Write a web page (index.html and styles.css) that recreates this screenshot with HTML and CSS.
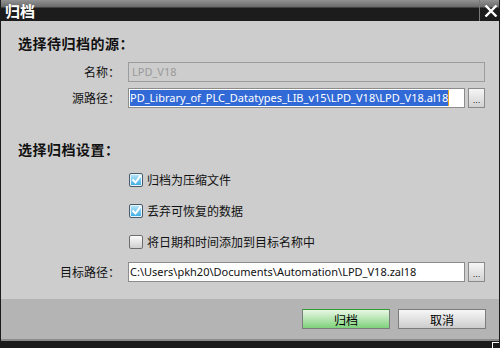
FILE: index.html
```html
<!DOCTYPE html>
<html lang="zh-CN">
  <head>
    <meta charset="UTF-8" />
    <meta name="viewport" content="width=device-width, initial-scale=1.0" />
    <title>归档</title>
    <link rel="stylesheet" href="styles.css">
  </head>
  <body>
    <div id="dialog">
      <div id="titlebar">
        <span class="title">归档</span>
        <button id="close-btn" type="button">
          <svg width="14" height="12" viewBox="0 0 14 12">
            <path d="M1.5 0.5 L12.5 11.5 M12.5 0.5 L1.5 11.5" stroke="#fff" stroke-width="2.4" fill="none" />
          </svg>
        </button>
      </div>

      <div id="content">
        <h2 class="section-heading">选择待归档的源：</h2>
        <div class="form-grid">
          <label class="field-label">名称：</label>
          <div class="text-field disabled wide">LPD_V18</div>

          <label class="field-label">源路径：</label>
          <div class="text-field"><span class="selected">PD_Library_of_PLC_Datatypes_LIB_v15\LPD_V18\LPD_V18.al18</span></div>
          <button class="browse-btn" type="button">...</button>
        </div>

        <h2 class="section-heading second">选择归档设置：</h2>
        <div class="options">
          <div class="option"><span class="checkbox checked"><svg width="11" height="11" viewBox="0 0 11 11"><path d="M1.5 5.5 L4.5 8.5 L9.5 1.5" stroke="#fff" stroke-width="2" fill="none" /></svg></span>归档为压缩文件</div>
          <div class="option"><span class="checkbox checked"><svg width="11" height="11" viewBox="0 0 11 11"><path d="M1.5 5.5 L4.5 8.5 L9.5 1.5" stroke="#fff" stroke-width="2" fill="none" /></svg></span>丢弃可恢复的数据</div>
          <div class="option"><span class="checkbox"></span>将日期和时间添加到目标名称中</div>
        </div>

        <div class="form-grid target">
          <label class="field-label">目标路径：</label>
          <div class="text-field">C:\Users\pkh20\Documents\Automation\LPD_V18.zal18</div>
          <button class="browse-btn" type="button">...</button>
        </div>
      </div>

      <div id="footer">
        <button class="dlg-btn primary" type="button">归档</button>
        <button class="dlg-btn" type="button">取消</button>
      </div>
      <div id="bottom-edge"><span class="grip"></span></div>
    </div>
  </body>
</html>
```

FILE: styles.css
```css
* {
  margin: 0;
  padding: 0;
  box-sizing: border-box;
}
html,
body {
  width: 100%;
  height: 100%;
  overflow: hidden;
}
body {
  background: #1b1b1b;
  font-family: "Noto Sans", "Noto Sans CJK SC", sans-serif;
  color: #111;
}
#dialog {
  width: 500px;
  height: 348px;
  display: flex;
  flex-direction: column;
  background-color: #cdcdcd;
  border-left: 1px solid #1b1b1b;
  border-right: 1px solid #1b1b1b;
}

#titlebar {
  height: 21px;
  flex: none;
  display: flex;
  align-items: stretch;
  justify-content: space-between;
  background: linear-gradient(#929292 0, #6a6a6a 7px, #1c1c1c 8px, #1c1c1c 100%);
}
#titlebar .title {
  color: #fff;
  font-family: "Noto Sans CJK SC", sans-serif;
  font-size: 15px;
  font-weight: bold;
  line-height: 21px;
  padding-left: 4px;
}
#close-btn {
  width: 20px;
  border: none;
  border-left: 1px solid #7a7a7a;
  background: transparent;
  display: flex;
  align-items: center;
  justify-content: center;
  padding-left: 2px;
}

#content {
  flex: 1;
}
.section-heading {
  font-family: "Noto Sans CJK SC", sans-serif;
  font-size: 14px;
  letter-spacing: 0.5px;
  font-weight: bold;
  line-height: 20px;
  padding-left: 17px;
  margin-top: 12px;
}
.section-heading.second {
  margin-top: 31px;
}

.form-grid {
  display: grid;
  grid-template-columns: 119px 337px 17px;
  column-gap: 8px;
  row-gap: 6px;
  margin-top: 9px;
  align-items: center;
}
.form-grid .browse-btn {
  margin-left: -5px;
}
.form-grid.target {
  margin-top: 11px;
}
.field-label {
  text-align: right;
  font-family: "Noto Sans CJK SC", sans-serif;
  font-size: 12px;
  line-height: 20px;
}
.text-field {
  height: 20px;
  border: 1px solid #8c8c8c;
  background: #fff;
  font-size: 11px;
  line-height: 18px;
  padding-left: 1px;
  white-space: nowrap;
  overflow: hidden;
}
.text-field.disabled {
  background: #cdcdcd;
  border-color: #9c9c9c;
  color: #9a9a9a;
  padding-left: 3px;
}
.text-field.wide {
  grid-column: 2 / 4;
  width: 357px;
}
.selected {
  display: inline-block;
  background: #3169d6;
  color: #fff;
  line-height: 16px;
  border-right: 1px solid #e0a020;
}
.browse-btn {
  width: 17px;
  height: 20px;
  border: 1px solid #8a8a8a;
  background: linear-gradient(#f6f6f6, #d2d2d2);
  font-size: 9px;
  line-height: 14px;
  padding-top: 4px;
  color: #222;
}

.options {
  display: flex;
  flex-direction: column;
  gap: 12px;
  margin-top: 11px;
}
.option {
  display: flex;
  align-items: center;
  height: 19px;
  padding-left: 128px;
  font-family: "Noto Sans CJK SC", sans-serif;
  font-size: 12px;
}
.checkbox {
  width: 14px;
  height: 14px;
  margin-right: 4px;
  border: 1px solid #6e6e6e;
  border-radius: 2px;
  background: linear-gradient(#fbfbfb, #cfcfcf);
  display: flex;
  align-items: center;
  justify-content: center;
}
.checkbox.checked {
  border-color: #4a5a6a;
  background: linear-gradient(#bfeaf9, #36a9e2);
  box-shadow: inset 0 0 0 1px #e6f6fc;
}

#footer {
  height: 42px;
  flex: none;
  background: #b4b4b4;
  display: flex;
  align-items: center;
  justify-content: flex-end;
  gap: 8px;
  padding-right: 13px;
  border-bottom: 2px solid #8a8a8a;
}
.dlg-btn {
  width: 88px;
  height: 20px;
  border: 1px solid #7c7c7c;
  background: linear-gradient(#f7f7f7, #cdcdcd);
  font-family: "Noto Sans CJK SC", sans-serif;
  font-size: 12px;
  color: #000;
}
.dlg-btn.primary {
  border-top-color: #2e9b2e;
  background: linear-gradient(#e9f7e5, #7fd27c);
}
#bottom-edge {
  height: 7px;
  flex: none;
  background: #1b1b1b;
  position: relative;
}
.grip {
  position: absolute;
  right: 0;
  bottom: 0;
  width: 7px;
  height: 6px;
  border-left: 1px solid #fff;
  border-top: 1px solid #fff;
}
```
